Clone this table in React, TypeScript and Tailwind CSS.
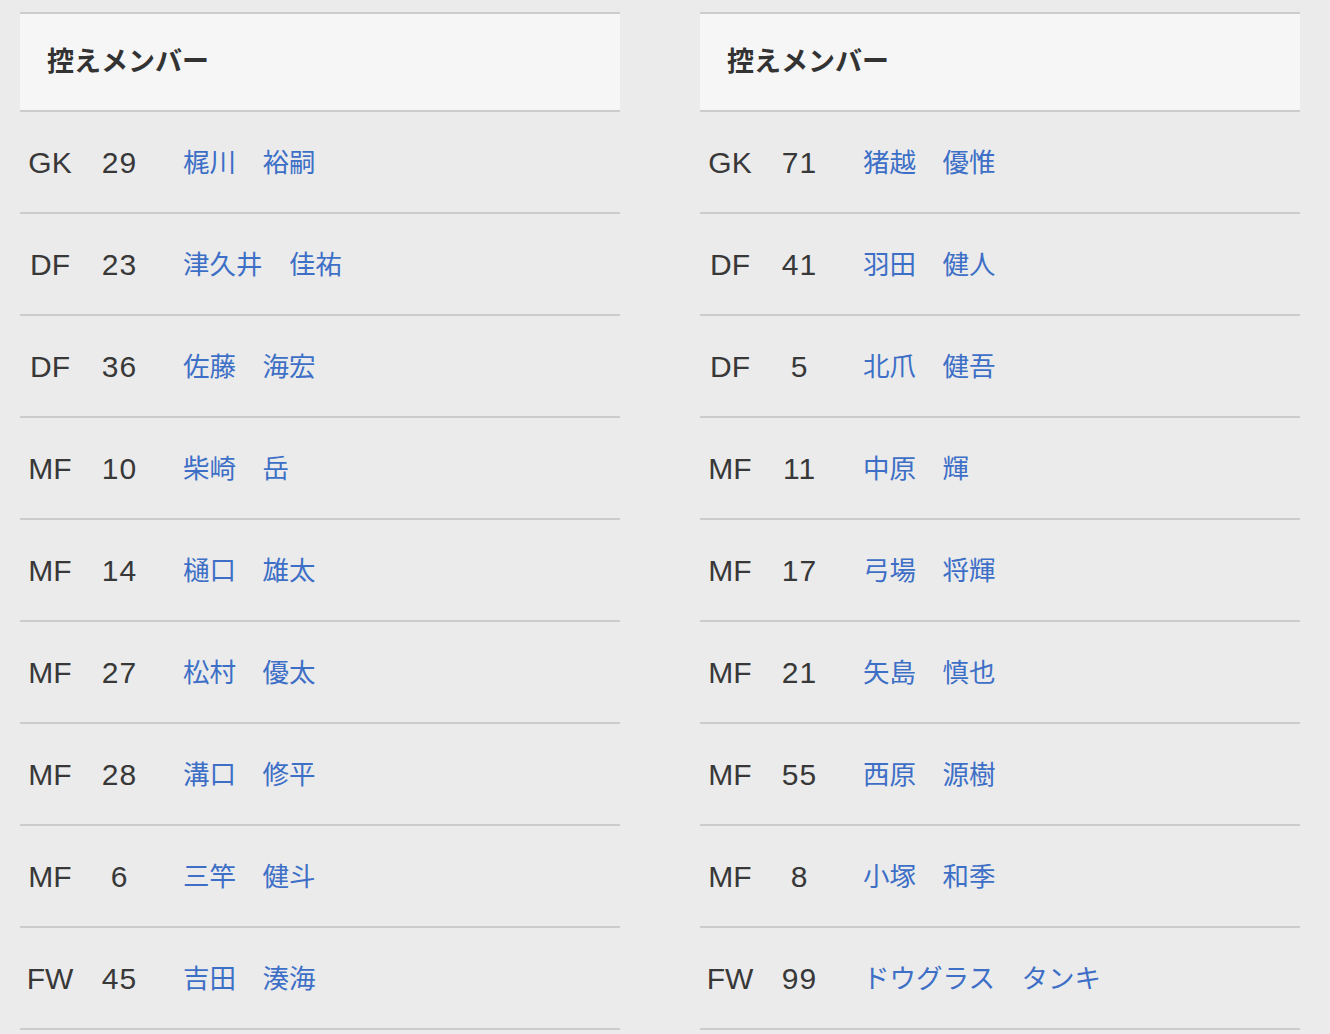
import React from 'react';

type Player = { pos: string; num: string; name: string };

const home: Player[] = [
  { pos: 'GK', num: '29', name: '梶川　裕嗣' },
  { pos: 'DF', num: '23', name: '津久井　佳祐' },
  { pos: 'DF', num: '36', name: '佐藤　海宏' },
  { pos: 'MF', num: '10', name: '柴崎　岳' },
  { pos: 'MF', num: '14', name: '樋口　雄太' },
  { pos: 'MF', num: '27', name: '松村　優太' },
  { pos: 'MF', num: '28', name: '溝口　修平' },
  { pos: 'MF', num: '6', name: '三竿　健斗' },
  { pos: 'FW', num: '45', name: '吉田　湊海' },
];

const away: Player[] = [
  { pos: 'GK', num: '71', name: '猪越　優惟' },
  { pos: 'DF', num: '41', name: '羽田　健人' },
  { pos: 'DF', num: '5', name: '北爪　健吾' },
  { pos: 'MF', num: '11', name: '中原　輝' },
  { pos: 'MF', num: '17', name: '弓場　将輝' },
  { pos: 'MF', num: '21', name: '矢島　慎也' },
  { pos: 'MF', num: '55', name: '西原　源樹' },
  { pos: 'MF', num: '8', name: '小塚　和季' },
  { pos: 'FW', num: '99', name: 'ドウグラス　タンキ' },
];

const SubsTable: React.FC<{ players: Player[] }> = ({ players }) => (
  <div className="w-[600px]">
    {/* header */}
    <div className="h-[100px] border-y-2 border-[#cccccc] bg-[#f6f6f6] flex items-center pl-[27px]">
      <span className="text-[27px] font-bold text-[#333333]">控えメンバー</span>
    </div>
    {players.map((p, i) => (
      <div key={i} className="h-[102px] border-b-2 border-[#cccccc] flex items-center text-[30px] text-[#383838]">
        <span className="w-[60px] text-center">{p.pos}</span>
        <span className="w-[78px] pl-[1px] text-center tracking-[1px]">{p.num}</span>
        <span className="pl-[25px] pt-[4px] text-[26.5px] text-[#3d6fc7]">{p.name}</span>
      </div>
    ))}
  </div>
);

export default function App() {
  return (
    <div
      className="min-h-[1034px] bg-[#ebebeb] pt-[12px] pl-[20px] flex gap-[80px]"
      style={{ fontFamily: '"Liberation Sans", "Noto Sans CJK JP", sans-serif' }}
    >
      <SubsTable players={home} />
      <SubsTable players={away} />
    </div>
  );
}
